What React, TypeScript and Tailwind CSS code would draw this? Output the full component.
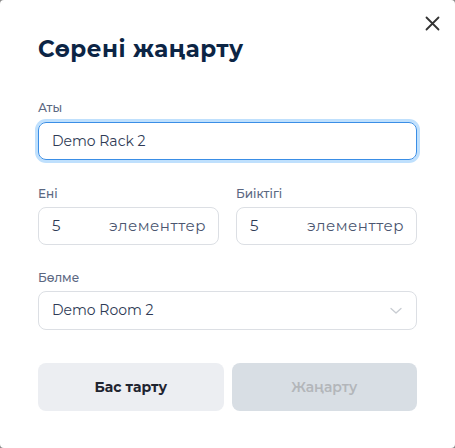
import React from "react";

export default function App() {
  const font = { fontFamily: "Montserrat, Inter, 'Noto Sans', sans-serif" };
  return (
    <div className="w-[455px] h-[448px] bg-[#8a8a8a]" style={font}>
      <div className="relative w-full h-full bg-white rounded-[4px] px-[38px] pt-[34px]">
        <button className="absolute right-[14px] top-[14px] w-[18px] h-[18px] flex items-center justify-center text-[#333]">
          <svg width="15" height="15" viewBox="0 0 15 15" fill="none" stroke="currentColor" strokeWidth="1.8" strokeLinecap="round">
            <path d="M1.5 1.5L13.5 13.5M13.5 1.5L1.5 13.5" />
          </svg>
        </button>
        <h1 className="text-[23px] font-bold text-[#0c2545] leading-[30px] tracking-[0.5px]">Сөрені жаңарту</h1>

        <div className="mt-[36px]">
          <label className="block text-[12px] font-medium text-[#5b6781] leading-[16px]">Аты</label>
          <div className="mt-[6px] h-[38px] rounded-[8px] border border-[#3a8ee6] shadow-[0_0_0_3px_#bfe0fd] flex items-center px-[13px] text-[14px] text-[#2e3a55]">
            Demo Rack 2
          </div>
        </div>

        <div className="mt-[26px] grid grid-cols-2 gap-[17px]">
          {[["Ені"], ["Биіктігі"]].map(([l]) => (
            <div key={l}>
              <label className="block text-[12px] font-medium text-[#5b6781] leading-[16px]">{l}</label>
              <div className="mt-[5px] h-[38px] rounded-[8px] border border-[#dcdfe4] flex items-center justify-between pl-[13px] pr-[12px] text-[15px] text-[#2e3a55]">
                <span>5</span>
                <span className="text-[#4b5670] tracking-[0.5px]">элементтер</span>
              </div>
            </div>
          ))}
        </div>

        <div className="mt-[25px]">
          <label className="block text-[12px] font-medium text-[#5b6781] leading-[16px]">Бөлме</label>
          <div className="mt-[5px] h-[39px] rounded-[8px] border border-[#dcdfe4] flex items-center justify-between pl-[13px] pr-[14px] text-[14px] text-[#2e3a55]">
            <span>Demo Room 2</span>
            <svg width="12" height="8" viewBox="0 0 12 8" fill="none" stroke="#c8ccd2" strokeWidth="1.3" strokeLinecap="round" strokeLinejoin="round">
              <path d="M1 1.5L6 6L11 1.5" />
            </svg>
          </div>
        </div>

        <div className="mt-[33px] flex gap-[8px]">
          <button className="flex-1 h-[48px] rounded-[8px] bg-[#eceef2] text-[14px] font-bold text-[#1f2430]">Бас тарту</button>
          <button className="flex-1 h-[48px] rounded-[8px] bg-[#d8dee4] text-[14px] font-semibold text-[#b3b6ba]">Жаңарту</button>
        </div>
      </div>
    </div>
  );
}
